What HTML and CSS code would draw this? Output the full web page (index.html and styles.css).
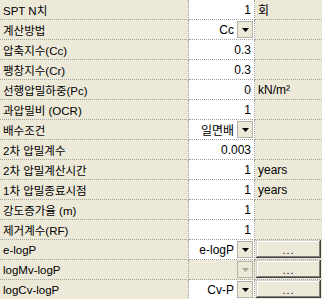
FILE: index.html
```html
<!DOCTYPE html>
<html lang="ko">
<head>
    <meta charset="utf-8">
    <title>Properties</title>
    <link rel="stylesheet" href="styles.css">
</head>
<body>
    <div class="grid">
        <div class="row">
            <div class="label">SPT N치</div>
            <div class="value">1</div>
            <div class="unit">회</div>
        </div>
        <div class="row">
            <div class="label">계산방법</div>
            <div class="value combo">Cc<span class="drop"><svg width="7" height="4"><polygon points="0,0 7,0 3.5,4" /></svg></span></div>
            <div class="unit"></div>
        </div>
        <div class="row">
            <div class="label">압축지수(Cc)</div>
            <div class="value">0.3</div>
            <div class="unit"></div>
        </div>
        <div class="row">
            <div class="label">팽창지수(Cr)</div>
            <div class="value">0.3</div>
            <div class="unit"></div>
        </div>
        <div class="row">
            <div class="label">선행압밀하중(Pc)</div>
            <div class="value">0</div>
            <div class="unit">kN/m²</div>
        </div>
        <div class="row">
            <div class="label">과압밀비 (OCR)</div>
            <div class="value">1</div>
            <div class="unit"></div>
        </div>
        <div class="row">
            <div class="label">배수조건</div>
            <div class="value combo">일면배<span class="drop"><svg width="7" height="4"><polygon points="0,0 7,0 3.5,4" /></svg></span></div>
            <div class="unit"></div>
        </div>
        <div class="row">
            <div class="label">2차 압밀계수</div>
            <div class="value">0.003</div>
            <div class="unit"></div>
        </div>
        <div class="row">
            <div class="label">2차 압밀계산시간</div>
            <div class="value">1</div>
            <div class="unit">years</div>
        </div>
        <div class="row">
            <div class="label">1차 압밀종료시점</div>
            <div class="value">1</div>
            <div class="unit">years</div>
        </div>
        <div class="row">
            <div class="label">강도증가율 (m)</div>
            <div class="value">1</div>
            <div class="unit"></div>
        </div>
        <div class="row">
            <div class="label">제거계수(RF)</div>
            <div class="value">1</div>
            <div class="unit"></div>
        </div>
        <div class="row">
            <div class="label">e-logP</div>
            <div class="value combo">e-logP<span class="drop"><svg width="7" height="4"><polygon points="0,0 7,0 3.5,4" /></svg></span></div>
            <div class="unit"><button class="more">...</button></div>
        </div>
        <div class="row">
            <div class="label">logMv-logP</div>
            <div class="value combo disabled"><span class="drop"><svg width="7" height="4"><polygon points="0,0 7,0 3.5,4" /></svg></span></div>
            <div class="unit"><button class="more">...</button></div>
        </div>
        <div class="row">
            <div class="label">logCv-logP</div>
            <div class="value combo">Cv-P<span class="drop"><svg width="7" height="4"><polygon points="0,0 7,0 3.5,4" /></svg></span></div>
            <div class="unit"><button class="more">...</button></div>
        </div>
    </div>
</body>
</html>
```

FILE: styles.css
```css
body {
    margin: 0;
    padding: 0;
    background-color: #ece9d8;
    font-family: "Liberation Sans", "Noto Sans CJK KR", sans-serif;
    font-size: 11.5px;
    color: #000;
}
.grid {
    width: 322px;
}
.row {
    display: grid;
    grid-template-columns: 189px 66px 1fr;
    height: 20px;
}
.row > div {
    box-sizing: border-box;
    height: 20px;
    border-bottom: 1px dotted #a0a0a0;
    display: flex;
    align-items: center;
    white-space: nowrap;
    overflow: hidden;
}
.label {
    padding-left: 3px;
    border-right: 1px dotted #a0a0a0;
}
.value {
    justify-content: flex-end;
    padding-right: 3px;
    background-color: #fff;
    border-right: 1px dotted #a0a0a0;
    font-size: 12px;
}
.value.combo {
    padding-right: 1px;
}
.value.disabled {
    background-color: #ece9d8;
}
.unit {
    padding-left: 3px;
    font-size: 12px;
}
.drop {
    box-sizing: border-box;
    width: 16px;
    height: 17px;
    margin-left: 3px;
    border: 1px solid #b5b2a7;
    background-color: #ece9d8;
    display: flex;
    align-items: center;
    justify-content: center;
}
.drop svg {
    fill: #000;
}
.disabled .drop svg {
    fill: #aca899;
}
.unit:has(.more) {
    padding: 0 1px 1px 1px;
    align-items: stretch;
}
.more {
    width: 100%;
    margin: 0;
    padding: 0 0 2px 0;
    border: none;
    background-color: #ece9d8;
    box-shadow: inset -1px -1px 0 #404040, inset 1px 1px 0 #d4d0c8, inset -2px -2px 0 #808080, inset 2px 2px 0 #fff;
    font-family: "Liberation Sans", sans-serif;
    font-size: 11px;
    letter-spacing: 1px;
    display: flex;
    align-items: flex-end;
    justify-content: center;
}
```
